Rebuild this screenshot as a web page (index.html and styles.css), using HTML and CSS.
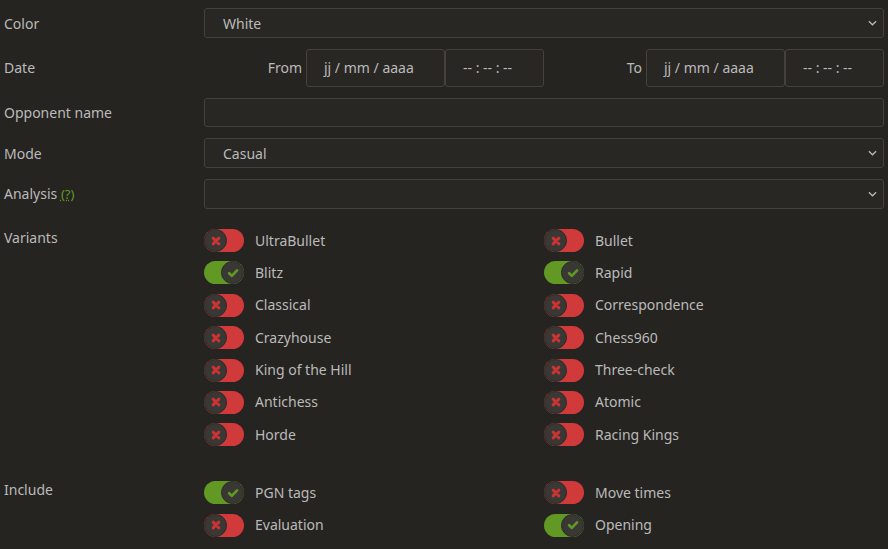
FILE: index.html
```html
<!DOCTYPE html>
<html>
<head>
<meta charset="utf-8">
<link rel="stylesheet" href="styles.css">
</head>
<body>
<form class="form">
  <div class="row r-color">
    <div class="label">Color</div>
    <div class="field"><div class="select"><span>White</span><svg class="chev" viewBox="0 0 10 6"><path d="M1 1l4 4 4-4" fill="none" stroke="#bababa" stroke-width="1.4"/></svg></div></div>
  </div>
  <div class="row r-date">
    <div class="label">Date</div>
    <div class="field dates">
      <div class="half"><span class="dlab">From</span><div class="box date">jj / mm / aaaa</div><div class="box time">-- : -- : --</div></div>
      <div class="half"><span class="dlab">To</span><div class="box date">jj / mm / aaaa</div><div class="box time">-- : -- : --</div></div>
    </div>
  </div>
  <div class="row r-opp">
    <div class="label">Opponent name</div>
    <div class="field"><div class="input"></div></div>
  </div>
  <div class="row r-mode">
    <div class="label">Mode</div>
    <div class="field"><div class="select"><span>Casual</span><svg class="chev" viewBox="0 0 10 6"><path d="M1 1l4 4 4-4" fill="none" stroke="#bababa" stroke-width="1.4"/></svg></div></div>
  </div>
  <div class="row r-analysis">
    <div class="label">Analysis <span class="help">(?)</span></div>
    <div class="field"><div class="select"><span></span><svg class="chev" viewBox="0 0 10 6"><path d="M1 1l4 4 4-4" fill="none" stroke="#bababa" stroke-width="1.4"/></svg></div></div>
  </div>
  <div class="row r-variants">
    <div class="label top">Variants</div>
    <div class="field toggles">
      <div class="tg"><span class="sw off"><span class="knob"><svg viewBox="0 0 10 10"><path d="M2.6 2.6l4.8 4.8M7.4 2.6l-4.8 4.8" stroke="#cc3333" stroke-width="2.4" stroke-linecap="round"/></svg></span></span><span class="tl">UltraBullet</span></div>
      <div class="tg"><span class="sw off"><span class="knob"><svg viewBox="0 0 10 10"><path d="M2.6 2.6l4.8 4.8M7.4 2.6l-4.8 4.8" stroke="#cc3333" stroke-width="2.4" stroke-linecap="round"/></svg></span></span><span class="tl">Bullet</span></div>
      <div class="tg"><span class="sw on"><span class="knob"><svg viewBox="0 0 10 10"><path d="M1.8 5.2l2.2 2.2 4.4-4.6" fill="none" stroke="#629924" stroke-width="2.2" stroke-linecap="round" stroke-linejoin="round"/></svg></span></span><span class="tl">Blitz</span></div>
      <div class="tg"><span class="sw on"><span class="knob"><svg viewBox="0 0 10 10"><path d="M1.8 5.2l2.2 2.2 4.4-4.6" fill="none" stroke="#629924" stroke-width="2.2" stroke-linecap="round" stroke-linejoin="round"/></svg></span></span><span class="tl">Rapid</span></div>
      <div class="tg"><span class="sw off"><span class="knob"><svg viewBox="0 0 10 10"><path d="M2.6 2.6l4.8 4.8M7.4 2.6l-4.8 4.8" stroke="#cc3333" stroke-width="2.4" stroke-linecap="round"/></svg></span></span><span class="tl">Classical</span></div>
      <div class="tg"><span class="sw off"><span class="knob"><svg viewBox="0 0 10 10"><path d="M2.6 2.6l4.8 4.8M7.4 2.6l-4.8 4.8" stroke="#cc3333" stroke-width="2.4" stroke-linecap="round"/></svg></span></span><span class="tl">Correspondence</span></div>
      <div class="tg"><span class="sw off"><span class="knob"><svg viewBox="0 0 10 10"><path d="M2.6 2.6l4.8 4.8M7.4 2.6l-4.8 4.8" stroke="#cc3333" stroke-width="2.4" stroke-linecap="round"/></svg></span></span><span class="tl">Crazyhouse</span></div>
      <div class="tg"><span class="sw off"><span class="knob"><svg viewBox="0 0 10 10"><path d="M2.6 2.6l4.8 4.8M7.4 2.6l-4.8 4.8" stroke="#cc3333" stroke-width="2.4" stroke-linecap="round"/></svg></span></span><span class="tl">Chess960</span></div>
      <div class="tg"><span class="sw off"><span class="knob"><svg viewBox="0 0 10 10"><path d="M2.6 2.6l4.8 4.8M7.4 2.6l-4.8 4.8" stroke="#cc3333" stroke-width="2.4" stroke-linecap="round"/></svg></span></span><span class="tl">King of the Hill</span></div>
      <div class="tg"><span class="sw off"><span class="knob"><svg viewBox="0 0 10 10"><path d="M2.6 2.6l4.8 4.8M7.4 2.6l-4.8 4.8" stroke="#cc3333" stroke-width="2.4" stroke-linecap="round"/></svg></span></span><span class="tl">Three-check</span></div>
      <div class="tg"><span class="sw off"><span class="knob"><svg viewBox="0 0 10 10"><path d="M2.6 2.6l4.8 4.8M7.4 2.6l-4.8 4.8" stroke="#cc3333" stroke-width="2.4" stroke-linecap="round"/></svg></span></span><span class="tl">Antichess</span></div>
      <div class="tg"><span class="sw off"><span class="knob"><svg viewBox="0 0 10 10"><path d="M2.6 2.6l4.8 4.8M7.4 2.6l-4.8 4.8" stroke="#cc3333" stroke-width="2.4" stroke-linecap="round"/></svg></span></span><span class="tl">Atomic</span></div>
      <div class="tg"><span class="sw off"><span class="knob"><svg viewBox="0 0 10 10"><path d="M2.6 2.6l4.8 4.8M7.4 2.6l-4.8 4.8" stroke="#cc3333" stroke-width="2.4" stroke-linecap="round"/></svg></span></span><span class="tl">Horde</span></div>
      <div class="tg"><span class="sw off"><span class="knob"><svg viewBox="0 0 10 10"><path d="M2.6 2.6l4.8 4.8M7.4 2.6l-4.8 4.8" stroke="#cc3333" stroke-width="2.4" stroke-linecap="round"/></svg></span></span><span class="tl">Racing Kings</span></div>
    </div>
  </div>
  <div class="row r-include">
    <div class="label top">Include</div>
    <div class="field toggles">
      <div class="tg"><span class="sw on"><span class="knob"><svg viewBox="0 0 10 10"><path d="M1.8 5.2l2.2 2.2 4.4-4.6" fill="none" stroke="#629924" stroke-width="2.2" stroke-linecap="round" stroke-linejoin="round"/></svg></span></span><span class="tl">PGN tags</span></div>
      <div class="tg"><span class="sw off"><span class="knob"><svg viewBox="0 0 10 10"><path d="M2.6 2.6l4.8 4.8M7.4 2.6l-4.8 4.8" stroke="#cc3333" stroke-width="2.4" stroke-linecap="round"/></svg></span></span><span class="tl">Move times</span></div>
      <div class="tg"><span class="sw off"><span class="knob"><svg viewBox="0 0 10 10"><path d="M2.6 2.6l4.8 4.8M7.4 2.6l-4.8 4.8" stroke="#cc3333" stroke-width="2.4" stroke-linecap="round"/></svg></span></span><span class="tl">Evaluation</span></div>
      <div class="tg"><span class="sw on"><span class="knob"><svg viewBox="0 0 10 10"><path d="M1.8 5.2l2.2 2.2 4.4-4.6" fill="none" stroke="#629924" stroke-width="2.2" stroke-linecap="round" stroke-linejoin="round"/></svg></span></span><span class="tl">Opening</span></div>
    </div>
  </div>
</form>
</body>
</html>
```
FILE: styles.css
```css
html, body {
  margin: 0;
  padding: 0;
  background: #262421;
  color: #bababa;
  font-family: "Noto Sans", "Liberation Sans", sans-serif;
  font-size: 14px;
}
.form {
  padding: 8px 4px 0 4px;
}
.row {
  display: flex;
  align-items: center;
}
.label {
  width: 200px;
  flex: none;
}
.label.top {
  align-self: flex-start;
}
.field {
  flex: 1;
}
.help {
  color: #629924;
  text-decoration: underline dotted;
  font-size: 13px;
}
.select, .input, .box {
  box-sizing: border-box;
  background: #292724;
  border: 1px solid #45423e;
  border-radius: 3px;
}
.select {
  height: 30px;
  display: flex;
  align-items: center;
  justify-content: space-between;
  padding: 0 6px 0 18px;
}
.chev {
  width: 9px;
  height: 6px;
}
.input {
  height: 29px;
}
.r-date { margin-top: 11px; }
.r-date .label { margin-top: -2px; }
.r-opp { margin-top: 11px; }
.r-mode { margin-top: 11px; }
.r-analysis { margin-top: 11px; }
.r-analysis .label { margin-top: -2px; }
.dates {
  display: flex;
}
.half {
  flex: 1;
  display: flex;
  justify-content: flex-end;
  align-items: center;
}
.dlab {
  margin-right: 4px;
  margin-top: -2px;
}
.box {
  height: 38px;
  display: flex;
  align-items: center;
  padding-left: 17px;
  padding-bottom: 2px;
}
.date { width: 139px; }
.time { width: 99px; }
.r-variants {
  margin-top: 20px;
}
.r-variants .label, .r-include .label {
  margin-top: -1px;
}
.r-include {
  margin-top: 35px;
}
.toggles {
  display: grid;
  grid-template-columns: 340px 1fr;
  row-gap: 9.4px;
}
.tg {
  display: flex;
  align-items: center;
  height: 23px;
}
.tl {
  margin-top: -1px;
}
.sw {
  position: relative;
  width: 40px;
  height: 23px;
  border-radius: 12px;
  flex: none;
  margin-right: 11px;
}
.sw.off { background: #d03a3a; }
.sw.on { background: #629924; }
.knob {
  position: absolute;
  top: 0;
  width: 23px;
  height: 23px;
  box-sizing: border-box;
  border-radius: 50%;
  background: #3a3835;
  border: 1px solid #2c2a27;
  display: flex;
  align-items: center;
  justify-content: center;
}
.sw.off .knob { left: 0; }
.sw.on .knob { right: 0; }
.knob svg {
  width: 12px;
  height: 12px;
}
```
